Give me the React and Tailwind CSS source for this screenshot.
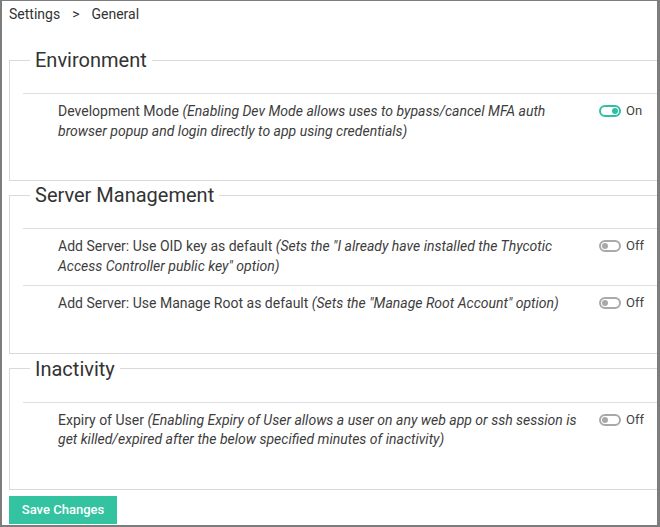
import React from "react";

function Toggle({ on }) {
  return (
    <div className="flex items-center gap-[5px] pt-[1px]">
      <div
        className={
          "w-[22px] h-[12px] rounded-full border-2 flex items-center px-[1px] " +
          (on ? "border-[#2fbfa3] justify-end" : "border-[#a9a9a9] justify-start")
        }
      >
        <div className={"w-[6px] h-[6px] rounded-full " + (on ? "bg-[#2fbfa3]" : "bg-[#a9a9a9]")} />
      </div>
      <span className="text-[13px] leading-[16px] text-[#444]">{on ? "On" : "Off"}</span>
    </div>
  );
}

function Row({ label, desc, on }) {
  return (
    <div className="flex border-t border-[#dedede] pt-[8px] pb-[9px]">
      <div className="flex-1 pl-[35px] pr-[9px] text-[14px] leading-[19.5px] text-[#3d3d3d]">
        <span>{label} </span>
        <i>({desc})</i>
      </div>
      <div className="w-[58px] shrink-0">
        <Toggle on={on} />
      </div>
    </div>
  );
}

function Section({ title, children, className }) {
  return (
    <fieldset className={"border border-r-0 border-[#d9d9d9] pl-[13px] pr-0 pb-[30px] pt-0 m-0 min-w-0 " + (className || "")}>
      <legend className="ml-[7px] px-[5px] text-[20px] leading-[24px] text-[#333]">{title}</legend>
      <div className="pt-[21px]">{children}</div>
    </fieldset>
  );
}

export default function App() {
  return (
    <div
      className="w-[660px] h-[527px] bg-white border-t border-l-2 border-r-[3px] border-b-2 border-[#7d7d7d] overflow-hidden pl-[7px]"
      style={{ fontFamily: "Roboto, 'Liberation Sans', sans-serif" }}
    >
      <div className="pt-[3px] h-[47px] text-[14px] leading-[20px] text-[#333]">
        Settings<span className="mx-[12px]">&gt;</span>General
      </div>
      <Section title="Environment">
        <Row
          label="Development Mode"
          desc="Enabling Dev Mode allows uses to bypass/cancel MFA auth browser popup and login directly to app using credentials"
          on
        />
      </Section>
      <Section title="Server Management" className="mt-[2px]">
        <Row
          label="Add Server: Use OID key as default"
          desc={'Sets the "I already have installed the Thycotic Access Controller public key" option'}
          on={false}
        />
        <Row
          label="Add Server: Use Manage Root as default"
          desc={'Sets the "Manage Root Account" option'}
          on={false}
        />
      </Section>
      <Section title="Inactivity" className="mt-[3px]">
        <Row
          label="Expiry of User"
          desc="Enabling Expiry of User allows a user on any web app or ssh session is get killed/expired after the below specified minutes of inactivity"
          on={false}
        />
      </Section>
      <button className="mt-[6px] w-[108px] h-[28px] bg-[#33c3a1] text-white text-[13px] font-medium">
        Save Changes
      </button>
    </div>
  );
}
